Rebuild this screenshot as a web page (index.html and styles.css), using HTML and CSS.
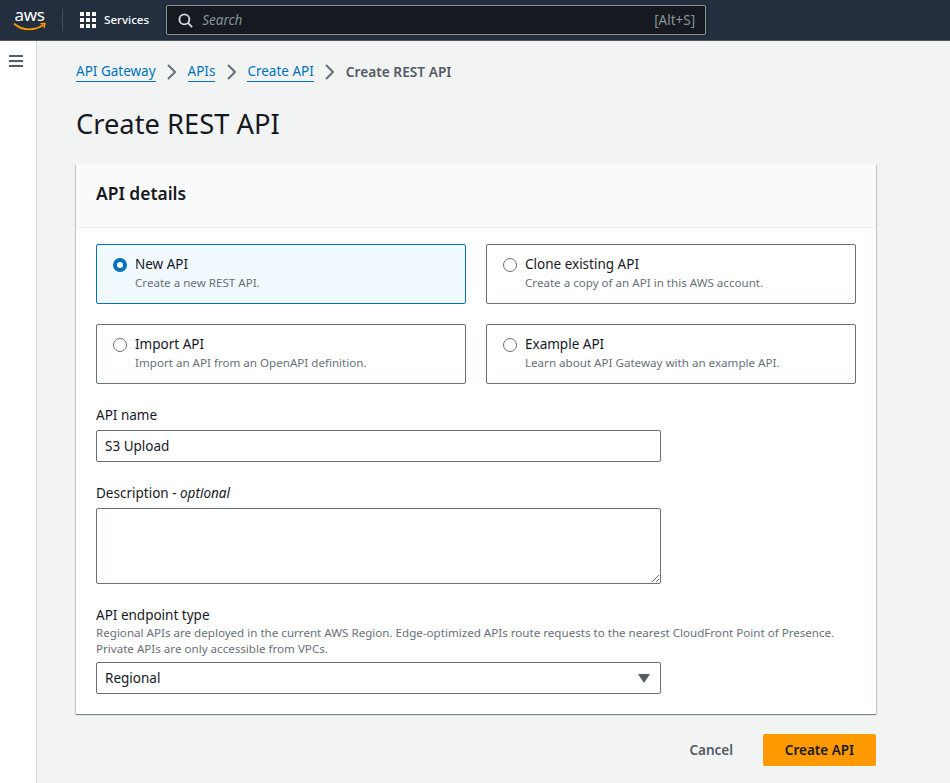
FILE: index.html
```html
<!DOCTYPE html>
<html lang="en">
<head>
<meta charset="utf-8">
<title>Create REST API</title>
<link rel="stylesheet" href="styles.css">
</head>
<body>
<header class="topbar">
  <svg class="logo" width="32" height="22" viewBox="0 0 32 22">
    <path d="M0.500 15C4.500 18.500 9.500 20.300 15 20.300c5 0 10-1.300 14-4" fill="none" stroke="#ff9900" stroke-width="1.700" stroke-linecap="round"/>
    <path d="M27 14.800l4-.4-.9 3.900" fill="none" stroke="#ff9900" stroke-width="1.500" stroke-linecap="round" stroke-linejoin="round"/>
    <text x="0.500" y="12" class="logo-text">aws</text>
  </svg>
  <span class="top-divider"></span>
  <svg class="grid-icon" width="16" height="16" viewBox="0 0 16 16" fill="#fff">
    <rect x="0" y="0" width="4" height="4"/><rect x="6" y="0" width="4" height="4"/><rect x="12" y="0" width="4" height="4"/>
    <rect x="0" y="6" width="4" height="4"/><rect x="6" y="6" width="4" height="4"/><rect x="12" y="6" width="4" height="4"/>
    <rect x="0" y="12" width="4" height="4"/><rect x="6" y="12" width="4" height="4"/><rect x="12" y="12" width="4" height="4"/>
  </svg>
  <span class="services">Services</span>
  <div class="search">
    <svg width="15" height="15" viewBox="0 0 16 16" fill="none" stroke="#d5dbdb" stroke-width="2">
      <circle cx="6.800" cy="6.800" r="5.300"/><path d="M10.800 10.800L15 15"/>
    </svg>
    <span class="search-text">Search</span>
    <span class="search-key">[Alt+S]</span>
  </div>
</header>
<div class="shell">
  <aside class="rail">
    <svg width="14" height="12" viewBox="0 0 14 12" fill="none" stroke="#545b64" stroke-width="2">
      <path d="M0 1h14M0 6h14M0 11h14"/>
    </svg>
  </aside>
  <main class="main">
    <nav class="crumbs">
      <a class="crumb">API Gateway</a>
      <svg class="chev" width="9" height="16" viewBox="0 0 9 16"><path d="M1 1l7 7-7 7"/></svg>
      <a class="crumb">APIs</a>
      <svg class="chev" width="9" height="16" viewBox="0 0 9 16"><path d="M1 1l7 7-7 7"/></svg>
      <a class="crumb">Create API</a>
      <svg class="chev" width="9" height="16" viewBox="0 0 9 16"><path d="M1 1l7 7-7 7"/></svg>
      <span class="crumb-current">Create REST API</span>
    </nav>
    <h1 class="title">Create REST API</h1>
    <section class="card">
      <div class="card-head"><h2 class="card-title">API details</h2></div>
      <div class="card-body">
        <div class="tiles">
          <div class="tile tile-on"><span class="radio radio-on"></span><div><div class="tile-name">New API</div><div class="tile-desc">Create a new REST API.</div></div></div>
          <div class="tile"><span class="radio"></span><div><div class="tile-name">Clone existing API</div><div class="tile-desc">Create a copy of an API in this AWS account.</div></div></div>
          <div class="tile"><span class="radio"></span><div><div class="tile-name">Import API</div><div class="tile-desc">Import an API from an OpenAPI definition.</div></div></div>
          <div class="tile"><span class="radio"></span><div><div class="tile-name">Example API</div><div class="tile-desc">Learn about API Gateway with an example API.</div></div></div>
        </div>
        <div class="field field-name">
          <label class="label">API name</label>
          <input class="input" type="text" value="S3 Upload">
        </div>
        <div class="field field-desc">
          <label class="label">Description - <i>optional</i></label>
          <textarea class="textarea"></textarea>
        </div>
        <div class="field field-type">
          <label class="label">API endpoint type</label>
          <p class="hint">Regional APIs are deployed in the current AWS Region. Edge-optimized APIs route requests to the nearest CloudFront Point of Presence. Private APIs are only accessible from VPCs.</p>
          <div class="select"><span>Regional</span><svg width="12" height="9" viewBox="0 0 12 9"><path d="M0 0h12L6 9z" fill="#545b64"/></svg></div>
        </div>
      </div>
    </section>
    <div class="actions">
      <button class="btn-cancel" type="button">Cancel</button>
      <button class="btn-primary" type="button">Create API</button>
    </div>
  </main>
</div>
</body>
</html>
```
FILE: styles.css
```css
* { box-sizing: border-box; }
html, body { margin: 0; height: 100%; overflow: hidden; }
body {
  font-family: "Noto Sans", "Open Sans", sans-serif;
  font-size: 13.500px;
  line-height: 20px;
  color: #16191f;
  background: #f2f3f3;
}
.topbar {
  height: 41px;
  background: #232f3e;
  border-bottom: 1px solid #545b64;
  display: flex;
  align-items: center;
  padding-left: 14px;
}
.logo { overflow: visible; flex: none; }
.logo-text { font-family: "Noto Sans", sans-serif; font-size: 17px; fill: #fff; letter-spacing: -0.300px; }
.top-divider { width: 1px; height: 22px; background: #414d5c; margin-left: 16px; }
.grid-icon { margin-left: 17px; flex: none; }
.services { color: #fff; font-size: 11.600px; font-weight: 500; margin-left: 8px; }
.search {
  width: 540px;
  height: 30px;
  margin-left: 17px;
  background: #16191f;
  border: 1px solid #879596;
  border-radius: 2px;
  display: flex;
  align-items: center;
  padding: 0 10px 0 11px;
}
.search-text { color: #879596; font-style: italic; margin-left: 9px; }
.search-key { color: #879596; margin-left: auto; }
.shell { display: flex; height: 742px; }
.rail {
  width: 37px;
  flex: none;
  background: #fff;
  border-right: 1px solid #d5dbdb;
  padding: 14px 0 0 9px;
}
.rail svg { display: block; }
.main { width: 800px; margin-left: 39px; padding-top: 20px; }
.crumbs { display: flex; align-items: center; gap: 11.500px; height: 22px; }
.crumb { color: #0073bb; border-bottom: 1px solid #0073bb; line-height: 19px; }
.chev { fill: none; stroke: #687078; stroke-width: 2; flex: none; }
.crumb-current { color: #545b64; font-weight: 600; font-size: 13.700px; }
.title { font-size: 27.300px; line-height: 36px; font-weight: 400; margin: 23px 0 22px; }
.card {
  background: #fff;
  box-shadow: 0 1px 1px 0 rgba(0,28,36,.3), 1px 1px 1px 0 rgba(0,28,36,.15), -1px 1px 1px 0 rgba(0,28,36,.15);
}
.card-head {
  height: 64px;
  background: #fafafa;
  border-bottom: 1px solid #eaeded;
  padding: 18px 20px 0;
}
.card-title { font-size: 17.400px; line-height: 22px; font-weight: 600; margin: 0; }
.card-body { padding: 16px 20px 20px; }
.tiles { display: grid; grid-template-columns: 370px 370px; gap: 20px; }
.tile {
  height: 60px;
  border: 1px solid #687078;
  border-radius: 2px;
  padding: 9px 16px 0;
  display: flex;
  gap: 8px;
}
.tile-on { border-color: #0073bb; background: #f1faff; }
.radio {
  width: 14px; height: 14px;
  border: 1px solid #687078;
  border-radius: 50%;
  background: #fff;
  margin-top: 4px;
  flex: none;
}
.radio-on { border: 4px solid #0073bb; }
.tile-name { line-height: 20px; }
.tile-desc { font-size: 11.600px; line-height: 17px; color: #687078; }
.field { display: flex; flex-direction: column; width: 565px; }
.field-name, .field-desc { margin-top: 21px; }
.field-type { margin-top: 21px; width: 760px; }
.label { line-height: 20px; margin-bottom: 5px; }
.input, .textarea {
  width: 565px;
  font: inherit;
  color: #16191f;
  border: 1px solid #687078;
  border-radius: 2px;
  background: #fff;
  padding: 0 8px;
  display: block;
}
.input { height: 32px; }
.textarea { height: 76px; padding: 5px 8px; }
.field-type .label { margin-bottom: 0; }
.hint { margin: 0 0 5px; font-size: 11.600px; line-height: 16px; color: #687078; }
.select {
  width: 565px;
  height: 32px;
  border: 1px solid #687078;
  border-radius: 2px;
  background: #fff;
  display: flex;
  align-items: center;
  justify-content: space-between;
  padding: 0 10px 0 8px;
}
.actions { display: flex; justify-content: flex-end; align-items: center; gap: 30px; margin-top: 20px; }
.btn-cancel, .btn-primary { font: inherit; font-weight: 600; border: 0; cursor: pointer; }
.btn-cancel { background: none; color: #545b64; padding: 0; }
.btn-primary { width: 113px; height: 32px; background: #ff9900; color: #16191f; border-radius: 2px; }
```
